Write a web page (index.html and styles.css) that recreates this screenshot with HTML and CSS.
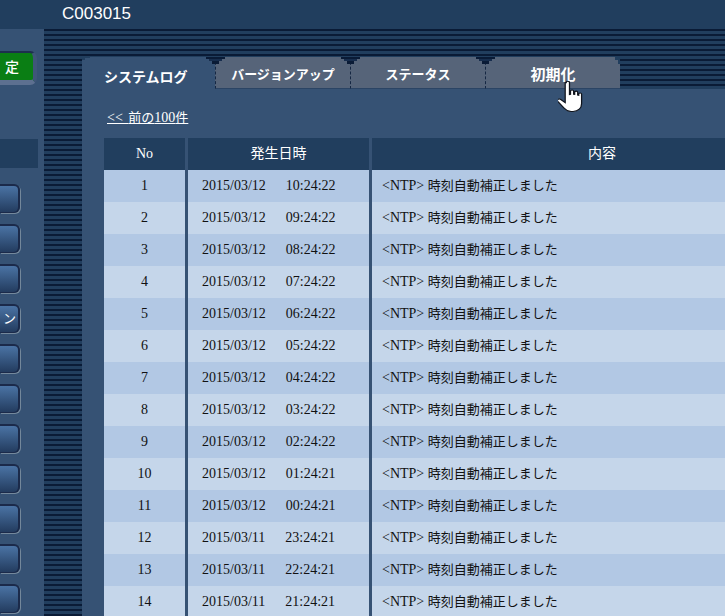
FILE: index.html
```html
<!DOCTYPE html>
<html lang="ja">
<head>
<meta charset="utf-8">
<title>C003015</title>
<link rel="stylesheet" href="styles.css">
</head>
<body>
<header class="top"><span class="cam">C003015</span></header>
<div class="layout">
  <aside class="side">
    <div class="setbtn"><span>定</span></div>
    <div class="sidebar-head"></div>
    <div class="navlist">
      <div class="navbtn"></div>
      <div class="navbtn"></div>
      <div class="navbtn"></div>
      <div class="navbtn"><span>ン</span></div>
      <div class="navbtn"></div>
      <div class="navbtn"></div>
      <div class="navbtn"></div>
      <div class="navbtn"></div>
      <div class="navbtn"></div>
      <div class="navbtn"></div>
      <div class="navbtn"></div>
    </div>
  </aside>
  <main class="main">
    <nav class="tabs">
      <div class="tab active">システムログ</div>
      <div class="tab t2">バージョンアップ</div>
      <div class="tab t3">ステータス</div>
      <div class="tab t4 last">初期化</div>
    </nav>
    <section class="panel">
      <a class="prev" href="#">&lt;&lt; <span class="ja">前の</span>100<span class="ja">件</span></a>
      <table class="log">
        <thead>
          <tr><th class="c1">No</th><th class="c2">発生日時</th><th class="c3">内容</th></tr>
        </thead>
        <tbody>
          <tr><td class="c1">1</td><td class="c2"><span>2015/03/12</span><span class="tm">10:24:22</span></td><td class="c3">&lt;NTP&gt; <span class="ja">時刻自動補正しました</span></td></tr>
          <tr><td class="c1">2</td><td class="c2"><span>2015/03/12</span><span class="tm">09:24:22</span></td><td class="c3">&lt;NTP&gt; <span class="ja">時刻自動補正しました</span></td></tr>
          <tr><td class="c1">3</td><td class="c2"><span>2015/03/12</span><span class="tm">08:24:22</span></td><td class="c3">&lt;NTP&gt; <span class="ja">時刻自動補正しました</span></td></tr>
          <tr><td class="c1">4</td><td class="c2"><span>2015/03/12</span><span class="tm">07:24:22</span></td><td class="c3">&lt;NTP&gt; <span class="ja">時刻自動補正しました</span></td></tr>
          <tr><td class="c1">5</td><td class="c2"><span>2015/03/12</span><span class="tm">06:24:22</span></td><td class="c3">&lt;NTP&gt; <span class="ja">時刻自動補正しました</span></td></tr>
          <tr><td class="c1">6</td><td class="c2"><span>2015/03/12</span><span class="tm">05:24:22</span></td><td class="c3">&lt;NTP&gt; <span class="ja">時刻自動補正しました</span></td></tr>
          <tr><td class="c1">7</td><td class="c2"><span>2015/03/12</span><span class="tm">04:24:22</span></td><td class="c3">&lt;NTP&gt; <span class="ja">時刻自動補正しました</span></td></tr>
          <tr><td class="c1">8</td><td class="c2"><span>2015/03/12</span><span class="tm">03:24:22</span></td><td class="c3">&lt;NTP&gt; <span class="ja">時刻自動補正しました</span></td></tr>
          <tr><td class="c1">9</td><td class="c2"><span>2015/03/12</span><span class="tm">02:24:22</span></td><td class="c3">&lt;NTP&gt; <span class="ja">時刻自動補正しました</span></td></tr>
          <tr><td class="c1">10</td><td class="c2"><span>2015/03/12</span><span class="tm">01:24:21</span></td><td class="c3">&lt;NTP&gt; <span class="ja">時刻自動補正しました</span></td></tr>
          <tr><td class="c1">11</td><td class="c2"><span>2015/03/12</span><span class="tm">00:24:21</span></td><td class="c3">&lt;NTP&gt; <span class="ja">時刻自動補正しました</span></td></tr>
          <tr><td class="c1">12</td><td class="c2"><span>2015/03/11</span><span class="tm">23:24:21</span></td><td class="c3">&lt;NTP&gt; <span class="ja">時刻自動補正しました</span></td></tr>
          <tr><td class="c1">13</td><td class="c2"><span>2015/03/11</span><span class="tm">22:24:21</span></td><td class="c3">&lt;NTP&gt; <span class="ja">時刻自動補正しました</span></td></tr>
          <tr><td class="c1">14</td><td class="c2"><span>2015/03/11</span><span class="tm">21:24:21</span></td><td class="c3">&lt;NTP&gt; <span class="ja">時刻自動補正しました</span></td></tr>
        </tbody>
      </table>
    </section>
  </main>
</div>
<svg class="hand" width="26" height="31" viewBox="0 2 20.6 29" preserveAspectRatio="none" aria-hidden="true">
  <path d="M6.5 3.5c0-1.600 2.600-1.600 2.600 0v11.200l.8-.2v-3c0-1.500 2.500-1.500 2.500 0v3l.8.1v-2c0-1.500 2.400-1.500 2.400 0v2.600l.8.2v-1.200c0-1.400 2.300-1.400 2.300 0v8.800c0 4.400-2.600 7.500-6.800 7.500h-1.500c-2.800 0-4-1-5.600-3.200l-5-6.300c-1-1.400 1-2.900 2.400-1.700l3.500 3V3.500z" fill="#fff" stroke="#10141c" stroke-width="1"/>
</svg>
</body>
</html>
```
FILE: styles.css
```css
* { box-sizing: border-box; }
html, body { margin: 0; padding: 0; height: 616px; overflow: hidden; }
body {
  position: relative;
  background: #365274;
  font-family: "Liberation Serif", "Noto Sans CJK JP", serif;
  color: #111;
}
.top {
  height: 29px;
  background: #213e5e;
  padding-left: 62px;
  color: #fff;
  font: 17px/28px "Liberation Sans", sans-serif;
}
.layout { display: flex; height: 587px; }

.side { width: 44px; flex: none; background: #365274; padding-top: 22px; }
.setbtn {
  width: 37px; height: 34px;
  border: solid #1d2f4e;
  border-width: 2px 4px 5px 0;
  border-right-color: #3f5679;
  border-bottom-color: #5d7090;
  border-radius: 0 7px 7px 0;
  background: #0a7e14;
  color: #fff;
  font: 500 14px/27px "Noto Sans CJK JP", sans-serif;
  padding-left: 5px;
}
.sidebar-head { width: 38px; height: 29px; margin-top: 54px; background: #213e5e; }
.navlist { display: flex; flex-direction: column; gap: 11px; margin-top: 16px; }
.navbtn {
  flex: none;
  width: 20px; height: 29px;
  border: solid #1b2a4a;
  border-width: 2px 2px 1px 0;
  border-radius: 0 6px 6px 0;
  box-shadow: 1px 1px 0 #74889b;
  background: linear-gradient(#4a73a4, #233c5f);
  color: #fff;
  font: 13px/24px "Noto Sans CJK JP", sans-serif;
  overflow: hidden;
  text-align: right;
  padding-right: 2px;
}

.main {
  flex: 1;
  min-width: 0;
  padding: 28px 0 0 38px;
  background: repeating-linear-gradient(#0a1b36 0 2px, #213e5e 2px 5px);
  overflow: hidden;
}
.tabs { display: flex; height: 32px; position: relative; }
.tab {
  position: relative;
  width: 135px;
  height: 32px;
  padding-top: 1px;
  background: #566479;
  border-bottom: 1px solid #2b4464;
  color: #fff;
  font: bold 13px/31px "Noto Sans CJK JP", sans-serif;
  text-align: center;
}
.tab.t2, .tab.t3, .tab.t4 { border-left: 1px dashed #152743; }
.tab.t4 { font-size: 15px; }
.tab::before {
  content: "";
  position: absolute;
  top: 0;
  left: -10px;
  width: 19px;
  height: 7px;
  background:
    linear-gradient(#0a1b36, #0a1b36) center 0 / 19px 2px no-repeat,
    linear-gradient(#172d4d, #172d4d) center 2px / 13px 2px no-repeat,
    linear-gradient(#0a1b36, #0a1b36) center 4px / 7px 3px no-repeat;
}
.tab.active {
  width: 133px;
  border-bottom: 0;
  font-size: 14px;
  line-height: 37px;
  text-align: left;
  padding-left: 22px;
  background:
    linear-gradient(#213e5e, #213e5e) 0 0 / 8px 1px no-repeat,
    linear-gradient(#213e5e, #213e5e) 0 1px / 3px 2px no-repeat,
    #365274;
}
.tab.active::before { display: none; }
.tab.last {
  background:
    linear-gradient(#213e5e, #213e5e) right 0 top 0 / 5px 3px no-repeat,
    linear-gradient(#213e5e, #213e5e) right 0 top 3px / 2px 4px no-repeat,
    #566479;
}

.panel { height: 527px; background: #365274; overflow: hidden; padding: 20px 0 0 22px; }
.prev {
  display: block;
  height: 29px;
  margin-left: 3px;
  color: #fff;
  font: 14px/18px "Liberation Serif", "Noto Sans CJK JP", serif;
  word-spacing: 2px;
  text-decoration: underline;
}
.ja { font-size: 13px; }
.log { border-collapse: separate; border-spacing: 0; width: 728px; table-layout: fixed; font-size: 14px; line-height: 16px; }
.c1 { width: 84px; }
.c2 { width: 184px; }
.c3 { width: 460px; }
.log th {
  height: 32px;
  padding: 0;
  background: #213e5e;
  color: #fff;
  font-weight: normal;
  font-size: 14px;
  border-right: 3px solid #365274;
}
.log td {
  height: 32px;
  padding: 0;
  background: #c5d6ea;
  border-right: 3px solid #365274;
}
.log tr:nth-child(odd) td { background: #b2c8e4; }
.log td.c1 { text-align: center; }
.log td.c2 { padding-left: 14px; }
.log td.c3 { padding-left: 10px; border-right: 0; }
.log th.c3 { border-right: 0; }
.tm { margin-left: 20px; }

.hand { position: absolute; left: 558px; top: 81px; }
```
